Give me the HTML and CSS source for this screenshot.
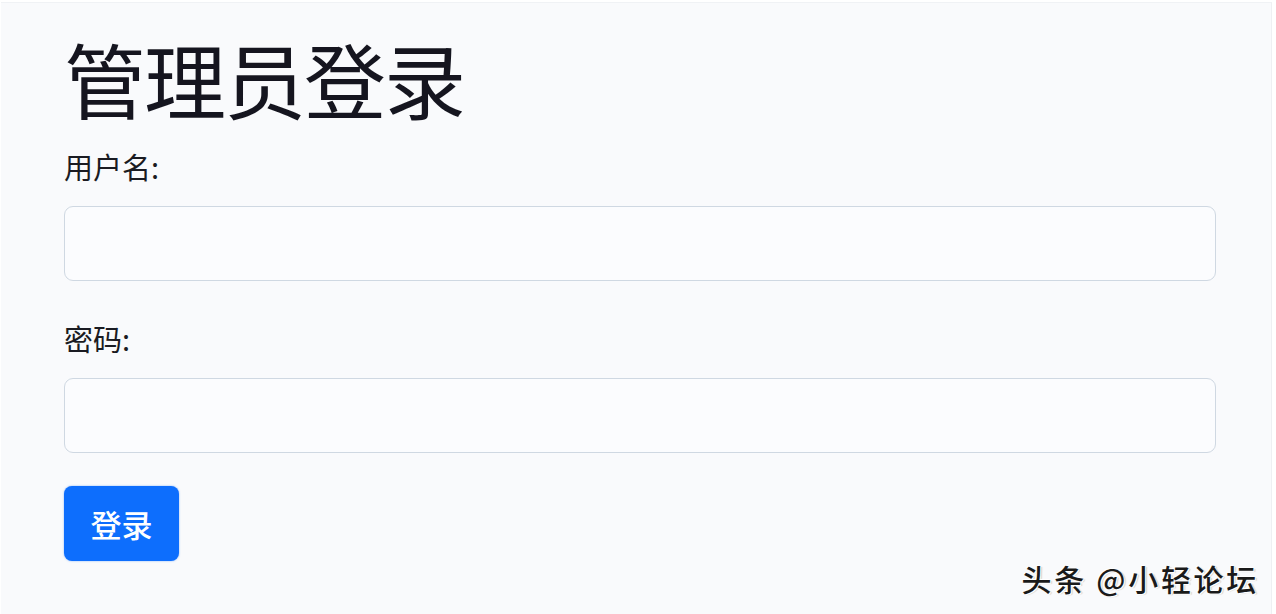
FILE: index.html
```html
<!DOCTYPE html>
<html lang="zh-CN">
<head>
<meta charset="utf-8">
<title>管理员登录</title>
<link rel="stylesheet" href="styles.css">
</head>
<body>
<div class="frame">
  <main class="container">
    <h1 class="title">管理员登录</h1>
    <form class="login-form">
      <div class="form-group">
        <label class="form-label" for="username">用户名:</label>
        <input class="form-control" id="username" type="text">
      </div>
      <div class="form-group form-group-second">
        <label class="form-label" for="password">密码:</label>
        <input class="form-control" id="password" type="password">
      </div>
      <button class="btn-primary" type="button">登录</button>
    </form>
  </main>
  <div class="watermark">头条 @小轻论坛</div>
</div>
</body>
</html>
```

FILE: styles.css
```css
html, body {
  margin: 0;
  padding: 0;
  height: 100%;
}

body {
  background: #ffffff;
  font-family: "Noto Sans CJK SC", "Noto Sans", "Liberation Sans", sans-serif;
  color: #212529;
}

.frame {
  position: relative;
  box-sizing: border-box;
  height: 614px;
  margin: 2px 4px 0 1px;
  background: #f9fafc;
  border-right: 1px solid #eef0f3;
  border-top: 1px solid #f0f2f5;
}

.container {
  padding: 27px 0 0 63px;
  width: 1152px;
}

.title {
  margin: 0;
  font-size: 82px;
  font-weight: 400;
  line-height: 96px;
  letter-spacing: -2px;
  color: #15151f;
}

.login-form {
  display: flex;
  flex-direction: column;
  align-items: flex-start;
  margin-top: 18px;
}

.form-group {
  display: flex;
  flex-direction: column;
  width: 100%;
  gap: 18px;
}

.form-group-second {
  margin-top: 35px;
}

.form-label {
  font-size: 29px;
  line-height: 44px;
  color: #1a1b22;
}

.form-control {
  box-sizing: border-box;
  width: 100%;
  height: 75px;
  margin: 0;
  border: 1.5px solid #cfd8e2;
  border-radius: 9px;
  background: #fbfcfe;
  font-size: 28px;
  padding: 0 18px;
  outline: none;
}

.btn-primary {
  margin-top: 33px;
  width: 115px;
  height: 75px;
  border: none;
  border-radius: 8px;
  background: #0d6efd;
  color: #ffffff;
  font-family: "Noto Sans CJK SC", sans-serif;
  font-size: 31px;
  font-weight: 500;
  padding: 0;
  box-shadow: 0 0 2px rgba(13, 110, 253, 0.5);
}

.watermark {
  position: absolute;
  right: 12px;
  bottom: 18px;
  font-size: 30px;
  font-weight: 500;
  line-height: 40px;
  letter-spacing: 2.7px;
  color: #1a1a1a;
  text-shadow: 1px 1px 0 #ffffff, -1px -1px 0 #ffffff, 2px 1px 1px #cfcfcf;
}
```
